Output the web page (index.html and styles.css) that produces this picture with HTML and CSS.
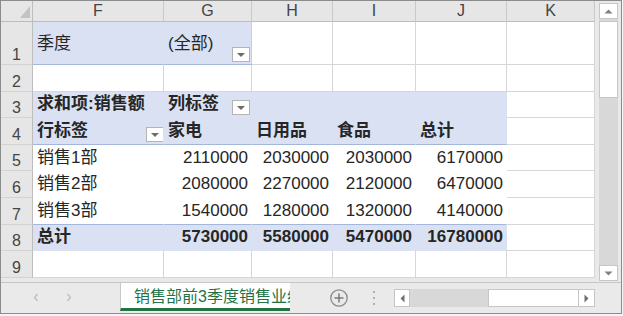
FILE: index.html
```html
<!DOCTYPE html>
<html lang="zh">
<head>
<meta charset="utf-8">
<title>销售部前3季度销售业绩</title>
<link rel="stylesheet" href="styles.css">
</head>
<body>
<div class="window">
  <div class="main">
    <div class="sheet-wrap">
      <div class="sheet">
        <!-- header row -->
        <div class="corner"><span class="tri"></span></div>
        <div class="ch">F</div>
        <div class="ch">G</div>
        <div class="ch">H</div>
        <div class="ch">I</div>
        <div class="ch">J</div>
        <div class="ch">K</div>

        <!-- row 1 -->
        <div class="rh">1</div>
        <div class="c pv lb r1">季度</div>
        <div class="c pv lb r1 keep-r">(全部)<span class="dd"><span class="arr"></span></span></div>
        <div class="c"></div>
        <div class="c"></div>
        <div class="c"></div>
        <div class="c"></div>

        <!-- row 2 -->
        <div class="rh">2</div>
        <div class="c"></div>
        <div class="c"></div>
        <div class="c"></div>
        <div class="c"></div>
        <div class="c"></div>
        <div class="c"></div>

        <!-- row 3 -->
        <div class="rh">3</div>
        <div class="c pv b">求和项:销售额</div>
        <div class="c pv b">列标签<span class="dd"><span class="arr"></span></span></div>
        <div class="c pv"></div>
        <div class="c pv"></div>
        <div class="c pv"></div>
        <div class="c"></div>

        <!-- row 4 -->
        <div class="rh">4</div>
        <div class="c pv lb b">行标签<span class="dd dd-edge"><span class="arr"></span></span></div>
        <div class="c pv lb b">家电</div>
        <div class="c pv lb b">日用品</div>
        <div class="c pv lb b">食品</div>
        <div class="c pv lb b">总计</div>
        <div class="c"></div>

        <!-- row 5 -->
        <div class="rh">5</div>
        <div class="c pw">销售1部</div>
        <div class="c pw num">2110000</div>
        <div class="c pw num">2030000</div>
        <div class="c pw num">2030000</div>
        <div class="c pw num">6170000</div>
        <div class="c"></div>

        <!-- row 6 -->
        <div class="rh">6</div>
        <div class="c pw">销售2部</div>
        <div class="c pw num">2080000</div>
        <div class="c pw num">2270000</div>
        <div class="c pw num">2120000</div>
        <div class="c pw num">6470000</div>
        <div class="c"></div>

        <!-- row 7 -->
        <div class="rh">7</div>
        <div class="c pw lb">销售3部</div>
        <div class="c pw lb num">1540000</div>
        <div class="c pw lb num">1280000</div>
        <div class="c pw lb num">1320000</div>
        <div class="c pw lb num">4140000</div>
        <div class="c"></div>

        <!-- row 8 -->
        <div class="rh">8</div>
        <div class="c pv b">总计</div>
        <div class="c pv b num">5730000</div>
        <div class="c pv b num">5580000</div>
        <div class="c pv b num">5470000</div>
        <div class="c pv b num">16780000</div>
        <div class="c"></div>

        <!-- row 9 -->
        <div class="rh">9</div>
        <div class="c"></div>
        <div class="c"></div>
        <div class="c"></div>
        <div class="c"></div>
        <div class="c"></div>
        <div class="c"></div>
      </div>
    </div>
    <div class="vscroll">
      <div class="sbtn vs-up"><svg width="9" height="5" viewBox="0 0 9 5"><polygon points="0.5,4.5 8.5,4.5 4.5,0.5" fill="#808080"/></svg></div>
      <div class="vs-track"><div class="vs-thumb"></div></div>
      <div class="sbtn vs-down"><svg width="9" height="5" viewBox="0 0 9 5"><polygon points="0.5,0.5 8.5,0.5 4.5,4.5" fill="#808080"/></svg></div>
    </div>
  </div>
  <div class="tabbar">
    <div class="nav">
      <svg class="chev" width="6" height="9" viewBox="0 0 6 9"><polyline points="4.5,1 1.5,4.5 4.5,8" fill="none" stroke="#bdbdbd" stroke-width="1.3"/></svg>
      <svg class="chev chev-r" width="6" height="9" viewBox="0 0 6 9"><polyline points="1.5,1 4.5,4.5 1.5,8" fill="none" stroke="#bdbdbd" stroke-width="1.3"/></svg>
    </div>
    <div class="tab"><span class="tab-text">销售部前3季度销售业绩</span></div>
    <svg class="add" width="20" height="20" viewBox="0 0 20 20"><circle cx="10" cy="10" r="8.2" fill="none" stroke="#8a8a8a" stroke-width="1.3"/><line x1="10" y1="5.5" x2="10" y2="14.5" stroke="#7a7a7a" stroke-width="1.5"/><line x1="5.5" y1="10" x2="14.5" y2="10" stroke="#7a7a7a" stroke-width="1.5"/></svg>
    <svg class="dots" width="4" height="16" viewBox="0 0 4 16"><rect x="1" y="1" width="2" height="2" fill="#b0b0b0"/><rect x="1" y="7" width="2" height="2" fill="#b0b0b0"/><rect x="1" y="13" width="2" height="2" fill="#b0b0b0"/></svg>
    <div class="hscroll">
      <div class="sbtn hs-btn"><svg width="5" height="9" viewBox="0 0 5 9"><polygon points="4.5,0.5 4.5,8.5 0.5,4.5" fill="#707070"/></svg></div>
      <div class="hs-track"></div>
      <div class="hs-thumb"></div>
      <div class="sbtn hs-btn hs-right"><svg width="5" height="9" viewBox="0 0 5 9"><polygon points="0.5,0.5 0.5,8.5 4.5,4.5" fill="#707070"/></svg></div>
    </div>
  </div>
</div>
</body>
</html>
```

FILE: styles.css
```css
html, body {
  margin: 0;
  padding: 0;
}

body {
  width: 623px;
  height: 316px;
  overflow: hidden;
  background: #f4f4f4;
  font-family: "Liberation Sans", "Noto Sans CJK SC", sans-serif;
}

.window {
  width: 622px;
  height: 314px;
  box-sizing: border-box;
  border: 1px solid #8c8c8c;
  display: flex;
  flex-direction: column;
  background: #e9e9e9;
}

.main {
  display: flex;
  height: 281px;
  flex: none;
}

.sheet-wrap {
  width: 594px;
  background: #e9e9e9;
}

.sheet {
  display: grid;
  grid-template-columns: 32px 131px 88px 81px 83px 91px 88px;
  grid-template-rows: 21px 43px repeat(8, 26.6px);
  background: #fff;
}

/* header cells */
.corner {
  background: #e6e6e6;
  border-right: 1px solid #bdbdbd;
  border-bottom: 1px solid #bdbdbd;
  box-sizing: border-box;
  position: relative;
}

.tri {
  position: absolute;
  right: 2px;
  bottom: 3px;
  width: 0;
  height: 0;
  border-left: 10px solid transparent;
  border-bottom: 12px solid #c3c3c3;
}

.ch {
  background: #e6e6e6;
  border-right: 1px solid #c9c9c9;
  border-bottom: 1px solid #bdbdbd;
  box-sizing: border-box;
  display: flex;
  align-items: center;
  justify-content: center;
  font-size: 16px;
  color: #444;
  line-height: 1;
}

.rh {
  background: #e6e6e6;
  border-right: 1px solid #bdbdbd;
  border-bottom: 1px solid #d2d2d2;
  box-sizing: border-box;
  display: flex;
  align-items: flex-end;
  justify-content: center;
  font-size: 16px;
  line-height: 16px;
  color: #444;
  padding-bottom: 1px;
}

/* grid cells */
.c {
  border-right: 1px solid #d6d6d6;
  border-bottom: 1px solid #d6d6d6;
  box-sizing: border-box;
  display: flex;
  align-items: center;
  padding: 0 3px 0 4px;
  font-size: 17px;
  line-height: 20px;
  color: #262626;
  white-space: nowrap;
  overflow: hidden;
}

.r1 {
  padding-top: 2px;
}

.pv {
  background: #d9e1f2;
  border-right-color: #d9e1f2;
  border-bottom-color: #d9e1f2;
}

.pw {
  background: #fff;
  border-right-color: #fff;
  border-bottom-color: #fff;
}

.keep-r {
  border-right-color: #c9cfdb;
}

.c.lb {
  border-bottom-color: #a3b6dc;
}

.b {
  font-weight: bold;
}

.num {
  justify-content: flex-end;
}

/* pivot dropdown buttons */
.dd {
  margin-left: auto;
  margin-right: -2px;
  align-self: flex-end;
  margin-bottom: 2px;
  width: 18px;
  height: 15px;
  box-sizing: border-box;
  background: #fff;
  border: 1px solid #b4b4b4;
  display: flex;
  align-items: center;
  justify-content: center;
  flex: none;
}

.dd-edge {
  margin-right: -4px;
}

.arr {
  width: 0;
  height: 0;
  border-left: 4px solid transparent;
  border-right: 4px solid transparent;
  border-top: 4px solid #6c6c6c;
  margin-top: 1px;
}

/* vertical scrollbar */
.vscroll {
  width: 26px;
  box-sizing: border-box;
  padding: 2px 3px 1px 4px;
  display: flex;
  flex-direction: column;
  background: #e9e9e9;
}

.sbtn {
  background: #fff;
  border: 1px solid #c6c6c6;
  box-sizing: border-box;
  display: flex;
  align-items: center;
  justify-content: center;
  flex: none;
}

.vs-up,
.vs-down {
  height: 16px;
}

.vs-track {
  flex: 1;
  background: #d8d8d8;
  padding-top: 2px;
}

.vs-thumb {
  height: 77px;
  background: #fff;
  border: 1px solid #c6c6c6;
  box-sizing: border-box;
}

/* sheet tab bar */
.tabbar {
  flex: 1;
  display: flex;
  align-items: stretch;
  border-top: 1px solid #c6c6c6;
  background: #eaeaea;
  padding-bottom: 2px;
  box-sizing: border-box;
}

.nav {
  width: 119px;
  display: flex;
  align-items: center;
  padding-left: 32px;
  box-sizing: border-box;
}

.chev-r {
  margin-left: 27px;
}

.tab {
  width: 170px;
  box-sizing: border-box;
  background: #fff;
  border-left: 1px solid #c8c8c8;
  border-bottom: 3px solid #217346;
  overflow: hidden;
  white-space: nowrap;
  display: flex;
  align-items: center;
  padding-left: 13px;
  padding-top: 2px;
}

.tab-text {
  font-size: 16px;
  line-height: 20px;
  color: #217346;
}

.add {
  align-self: center;
  margin-left: 39px;
  margin-top: 1px;
}

.dots {
  align-self: center;
  margin-left: 23px;
  margin-top: 1px;
}

.hscroll {
  align-self: center;
  margin-left: 18px;
  margin-top: 2px;
  width: 201px;
  height: 18px;
  display: flex;
}

.hs-btn {
  width: 16px;
  height: 18px;
}

.hs-right {
  width: 17px;
}

.hs-track {
  width: 78px;
  background: #d8d8d8;
}

.hs-thumb {
  width: 90px;
  background: #fff;
  border: 1px solid #c6c6c6;
  border-right: none;
  box-sizing: border-box;
}
```
